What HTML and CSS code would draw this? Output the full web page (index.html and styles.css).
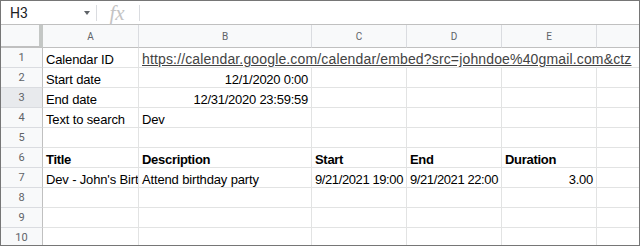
FILE: index.html
```html
<!DOCTYPE html>
<html lang="en">
<head>
    <meta charset="UTF-8">
    <title>Calendar sheet</title>
    <link rel="stylesheet" href="styles.css">
</head>
<body>
<div class="sheet">
    <div class="formula-bar">
        <div class="name-box">
            <span>H3</span>
            <span class="caret"></span>
        </div>
        <div class="sep"></div>
        <div class="fx">fx</div>
        <div class="sep"></div>
        <div class="formula-input"></div>
    </div>

    <div class="grid">
        <!-- column headers -->
        <div class="corner"></div>
        <div class="col-head">A</div>
        <div class="col-head">B</div>
        <div class="col-head">C</div>
        <div class="col-head">D</div>
        <div class="col-head">E</div>
        <div class="col-head last"></div>

        <!-- row 1 -->
        <div class="row-head">1</div>
        <div class="cell">Calendar ID</div>
        <div class="cell span-rest"><span class="link">https://calendar.google.com/calendar/embed?src=johndoe%40gmail.com&amp;ctz</span></div>

        <!-- row 2 -->
        <div class="row-head">2</div>
        <div class="cell">Start date</div>
        <div class="cell num">12/1/2020 0:00</div>
        <div class="cell"></div>
        <div class="cell"></div>
        <div class="cell"></div>
        <div class="cell last"></div>

        <!-- row 3 -->
        <div class="row-head active">3</div>
        <div class="cell">End date</div>
        <div class="cell num">12/31/2020 23:59:59</div>
        <div class="cell"></div>
        <div class="cell"></div>
        <div class="cell"></div>
        <div class="cell last"></div>

        <!-- row 4 -->
        <div class="row-head">4</div>
        <div class="cell">Text to search</div>
        <div class="cell">Dev</div>
        <div class="cell"></div>
        <div class="cell"></div>
        <div class="cell"></div>
        <div class="cell last"></div>

        <!-- row 5 -->
        <div class="row-head">5</div>
        <div class="cell"></div>
        <div class="cell"></div>
        <div class="cell"></div>
        <div class="cell"></div>
        <div class="cell"></div>
        <div class="cell last"></div>

        <!-- row 6 -->
        <div class="row-head">6</div>
        <div class="cell bold">Title</div>
        <div class="cell bold">Description</div>
        <div class="cell bold">Start</div>
        <div class="cell bold">End</div>
        <div class="cell bold">Duration</div>
        <div class="cell last"></div>

        <!-- row 7 -->
        <div class="row-head">7</div>
        <div class="cell">Dev - John's Birthday</div>
        <div class="cell">Attend birthday party</div>
        <div class="cell date">9/21/2021 19:00</div>
        <div class="cell date">9/21/2021 22:00</div>
        <div class="cell num">3.00</div>
        <div class="cell last"></div>

        <!-- row 8 -->
        <div class="row-head">8</div>
        <div class="cell"></div>
        <div class="cell"></div>
        <div class="cell"></div>
        <div class="cell"></div>
        <div class="cell"></div>
        <div class="cell last"></div>

        <!-- row 9 -->
        <div class="row-head">9</div>
        <div class="cell"></div>
        <div class="cell"></div>
        <div class="cell"></div>
        <div class="cell"></div>
        <div class="cell"></div>
        <div class="cell last"></div>

        <!-- row 10 -->
        <div class="row-head">10</div>
        <div class="cell"></div>
        <div class="cell"></div>
        <div class="cell"></div>
        <div class="cell"></div>
        <div class="cell"></div>
        <div class="cell last"></div>
    </div>
</div>
</body>
</html>
```

FILE: styles.css
```css
:root {
    --frame: #767676;
    --head-bg: #f8f9fa;
    --head-line: #c0c0c0;
    --grid-line: #e2e3e3;
    --head-fg: #5f6368;
}
html, body {
    margin: 0;
    padding: 0;
    background: #fff;
}
.sheet {
    width: 640px;
    height: 246px;
    box-sizing: border-box;
    border: 1px solid var(--frame);
    overflow: hidden;
    font-family: "Liberation Sans", Arial, sans-serif;
    font-size: 13px;
    color: #000;
}

/* formula bar */
.formula-bar {
    height: 24px;
    box-sizing: border-box;
    border-bottom: 1px solid var(--head-line);
    display: flex;
    align-items: center;
}
.name-box {
    width: 95px;
    box-sizing: border-box;
    padding: 0 6px 0 9px;
    display: flex;
    align-items: center;
    justify-content: space-between;
    font-family: Roboto, "Liberation Sans", sans-serif;
    font-size: 14px;
    color: #202124;
}
.caret {
    width: 0; height: 0;
    border-left: 3px solid transparent;
    border-right: 3px solid transparent;
    border-top: 4px solid #5f6368;
}
.sep {
    width: 1px;
    height: 16px;
    background: #dadce0;
}
.fx {
    width: 42px;
    text-align: center;
    font-family: "Liberation Serif", serif;
    font-style: italic;
    font-size: 21px;
    line-height: 22px;
    color: #c4c4c4;
    padding-right: 2px;
    box-sizing: border-box;
}
.formula-input { flex: 1; }

/* grid */
.grid {
    display: grid;
    grid-template-columns: 42px 96px 173px 95px 95px 95px 1fr;
    grid-template-rows: 23px;
    grid-auto-rows: 20px;
}
.corner {
    background: var(--head-bg);
    box-sizing: border-box;
    border-right: 4px solid #c4c7c5;
    border-bottom: 2px solid var(--head-line);
}
.col-head {
    background: var(--head-bg);
    box-sizing: border-box;
    border-right: 1px solid #dadce0;
    border-bottom: 1px solid var(--head-line);
    display: flex;
    align-items: center;
    justify-content: center;
    font-family: Roboto, "Liberation Sans", sans-serif;
    font-size: 10px;
    color: var(--head-fg);
}
.col-head.last { border-right: none; }
.row-head {
    background: var(--head-bg);
    box-sizing: border-box;
    border-right: 1px solid var(--head-line);
    border-bottom: 1px solid #dadce0;
    display: flex;
    align-items: center;
    justify-content: center;
    font-family: Roboto, "Liberation Sans", sans-serif;
    font-size: 11px;
    color: var(--head-fg);
}
.row-head.active {
    background: #e8eaed;
}
.cell {
    box-sizing: border-box;
    border-right: 1px solid var(--grid-line);
    border-bottom: 1px solid var(--grid-line);
    padding: 0 3px;
    display: flex;
    align-items: flex-end;
    white-space: nowrap;
    overflow: hidden;
    line-height: 15px;
    letter-spacing: -0.15px;
}
.cell.last { border-right: none; }
.cell.num { justify-content: flex-end; letter-spacing: -0.25px; }
.cell.date { letter-spacing: -0.4px; }
.cell.bold { font-weight: bold; letter-spacing: -0.3px; }
.span-rest {
    grid-column: 3 / 8;
    border-right: none;
}
.link {
    color: #434343;
    text-decoration: underline;
    font-size: 14px;
    letter-spacing: 0.15px;
}
```
